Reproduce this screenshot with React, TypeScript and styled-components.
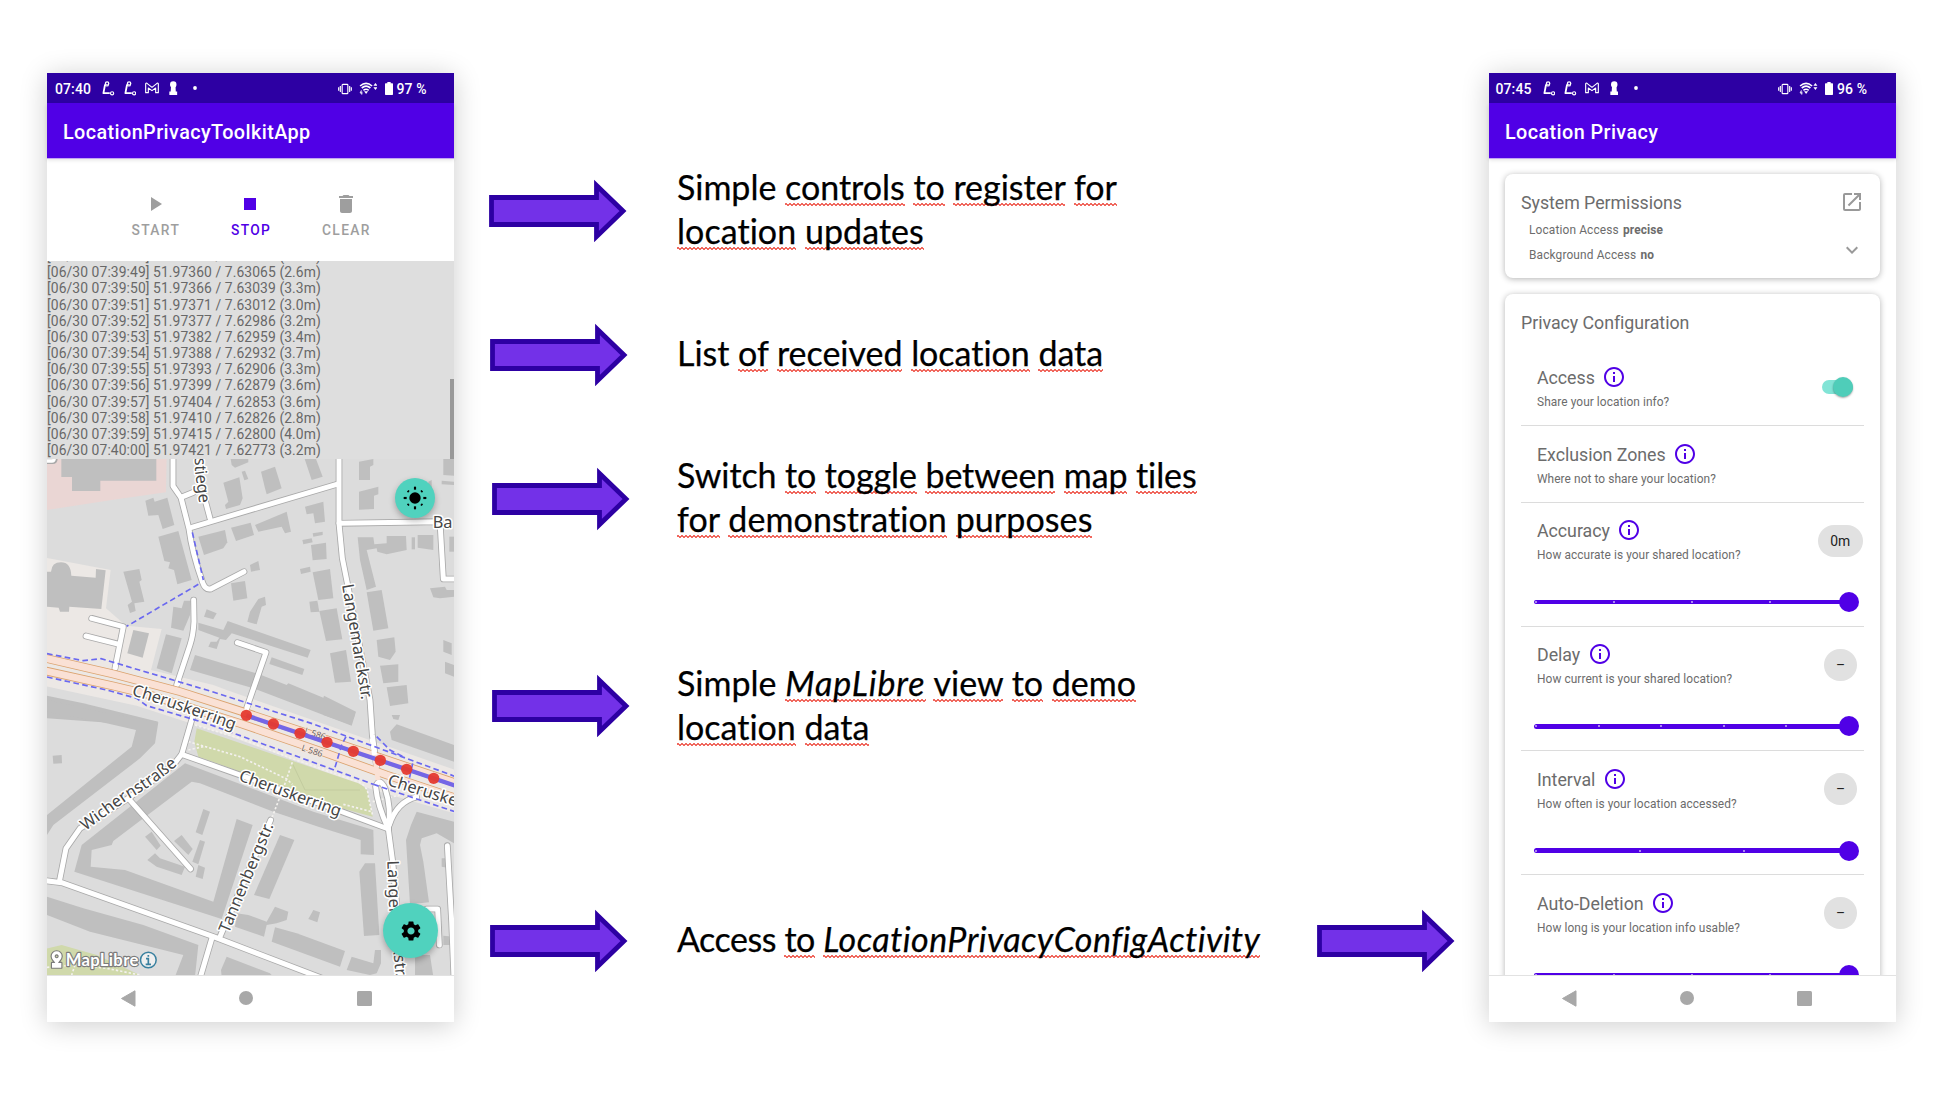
import React from "react";
import styled, { createGlobalStyle, css } from "styled-components";
import {
  MdPlayArrow,
  MdStop,
  MdDelete,
  MdOpenInNew,
  MdExpandMore,
  MdInfoOutline,
  MdSettings,
} from "react-icons/md";

const GlobalStyle = createGlobalStyle`
  body { margin: 0; background: #fff; }
  * { box-sizing: border-box; }
`;

const purple = "#5000e6";
const deep = "#2d00a3";
const teal = "#50d2be";

/* ---------- slide ---------- */

const Slide = styled.main`
  width: 1945px;
  height: 1094px;
  padding: 73px 49px 0 47px;
  display: flex;
  align-items: flex-start;
  overflow: hidden;
  background: #fff;
  font-family: Roboto, "Liberation Sans", sans-serif;
`;

const PhoneFrame = styled.section`
  width: 407px;
  height: 949px;
  flex: none;
  display: flex;
  flex-direction: column;
  background: #fff;
  box-shadow: 0 3px 26px rgba(0, 0, 0, 0.2);
`;

const StatusBar = styled.div<{ $shift: number }>`
  height: 30px;
  flex: none;
  display: flex;
  align-items: center;
  justify-content: space-between;
  padding: 1px ${(p) => 28 + p.$shift}px 0 ${(p) => 8 - p.$shift}px;
  background: ${deep};
  color: #fff;
  font-size: 14px;
  font-weight: 500;
  letter-spacing: 0.1px;
`;

const StatusGroup = styled.div`
  display: flex;
  align-items: center;
  svg { display: block; }
`;

const Clock = styled.span`
  width: 46.2px;
`;

const Notices = styled.div`
  display: flex;
  align-items: center;
  gap: 8.3px;
  margin-top: -1px;
`;

const Keyhole = styled.span`
  margin: 0 7.4px 0 2.2px;
`;

const Percent = styled.span`
  margin-left: 4px;
  width: 29.5px;
  white-space: nowrap;
`;

const AppBar = styled.header`
  height: 55px;
  flex: none;
  display: flex;
  align-items: center;
  padding: 3px 16px 0;
  background: ${purple};
  color: #fff;
  font-size: 19.8px;
  font-weight: 500;
  letter-spacing: 0.42px;
  box-shadow: 0 1px 0 #c3a5f3, 0 2px 4px rgba(0, 0, 0, 0.12);
  position: relative;
  z-index: 1;
`;

const NavBar = styled.nav<{ $shift: number }>`
  height: 47px;
  flex: none;
  display: flex;
  justify-content: space-between;
  align-items: center;
  padding: 0 ${(p) => 82.5 + p.$shift}px 2px ${(p) => 74 - p.$shift}px;
  border-top: 1px solid #e2e2e2;
  background: #fff;
  svg { display: block; }
`;

/* ---------- left phone ---------- */

const Controls = styled.div`
  height: 103px;
  flex: none;
  display: flex;
  justify-content: center;
  padding: 34px 0 0;
`;

const ControlButton = styled.button<{ $active?: boolean }>`
  width: 95.3px;
  padding: 0;
  border: 0;
  background: none;
  display: flex;
  flex-direction: column;
  align-items: center;
  gap: 6px;
  font: 500 13.8px/16px Roboto, sans-serif;
  letter-spacing: 1.35px;
  color: ${(p) => (p.$active ? purple : "#9e9e9e")};
  svg { width: 24px; height: 24px; }
`;

const ControlLabel = styled.span`
  padding-left: 1.3px;
`;

const Log = styled.div`
  height: 198px;
  flex: none;
  overflow: hidden;
  display: flex;
  flex-direction: column;
  justify-content: flex-end;
  padding-bottom: 0.6px;
  background: #dedede;
  color: #686868;
  font-size: 13.86px;
  line-height: 16.18px;
  letter-spacing: 0.09px;
  position: relative;
`;

const LogLine = styled.div`
  flex: none;
  white-space: nowrap;
`;

const ScrollThumb = styled.div`
  position: absolute;
  right: 0;
  bottom: 0;
  width: 4px;
  height: 80px;
  background: #999;
`;

const MapView = styled.div`
  position: relative;
  flex: 1;
  overflow: hidden;
  > svg { display: block; }
`;

const Fab = styled.button<{ $size: number; $right: number; $top: number }>`
  position: absolute;
  right: ${(p) => p.$right}px;
  top: ${(p) => p.$top}px;
  width: ${(p) => p.$size}px;
  height: ${(p) => p.$size}px;
  padding: 0;
  border: 0;
  border-radius: 50%;
  display: grid;
  place-items: center;
  color: #000;
  background: ${teal};
  box-shadow: 0 3px 6px rgba(0, 0, 0, 0.28);
  svg { width: 24px; height: 24px; }
`;

/* ---------- notes ---------- */

const Notes = styled.section`
  width: 966px;
  margin: 66px 34px 0 35px;
  display: grid;
  grid-template-rows: 144px 144px 144px 269px 202px;
  flex: none;
`;

const NoteRow = styled.div<{ $indent: number }>`
  display: flex;
  align-items: center;
  padding-left: ${(p) => p.$indent}px;
`;

const NoteText = styled.div<{ $offset: number; $lift: number }>`
  margin-left: ${(p) => p.$offset}px;
  padding-bottom: ${(p) => p.$lift}px;
  width: 640px;
  font-family: Lato, "Open Sans", sans-serif;
  font-size: 34px;
  line-height: 44px;
  font-variant-ligatures: none;
  -webkit-text-stroke: 0.25px #000;
  color: #000;
`;

const NoteLine = styled.div<{ $tracking: number }>`
  width: max-content;
  white-space: nowrap;
  letter-spacing: ${(p) => p.$tracking}px;
`;

const Wavy = styled.span<{ $italic?: number }>`
  ${(p) => p.$italic !== undefined && css`
    font-style: italic;
    letter-spacing: ${p.$italic}px;
  `}
  padding-bottom: 1px;
  background-image: linear-gradient(45deg, transparent 38%, #f0685e 38% 62%, transparent 62%),
    linear-gradient(-45deg, transparent 38%, #f0685e 38% 62%, transparent 62%);
  background-size: 4px 3px, 4px 3px;
  background-position: 0 calc(100% - 2px), 2px calc(100% - 2px);
  background-repeat: repeat-x;
`;

const ArrowSvg = styled.svg`
  display: block;
  flex: none;
`;

const Trailing = styled.div`
  margin-left: auto;
`;

/* ---------- right phone ---------- */

const Settings = styled.div`
  flex: 1;
  min-height: 0;
  overflow: hidden;
  padding: 16px 16px 0;
  display: flex;
  flex-direction: column;
  gap: 16px;
`;

const Card = styled.article<{ $h: number }>`
  height: ${(p) => p.$h}px;
  flex: none;
  padding: 16px;
  border-radius: 8px;
  background: #fff;
  color: #6c6c6c;
  box-shadow: 0 1px 6px rgba(0, 0, 0, 0.3);
`;

const CardHead = styled.div`
  display: flex;
  align-items: center;
  justify-content: space-between;
  height: 24px;
  svg { width: 24px; height: 24px; color: #999; }
`;

const CardTitle = styled.h2`
  margin: 0;
  padding-top: 1px;
  font-size: 17.8px;
  line-height: 24px;
  font-weight: 400;
  letter-spacing: -0.04px;
`;

const Permissions = styled.div`
  padding-top: 4px;
`;

const Permission = styled.div`
  height: 24.5px;
  padding-left: 8px;
  display: flex;
  align-items: center;
  justify-content: space-between;
  font-size: 11.9px;
  letter-spacing: 0.14px;
  b { margin-left: 1px; }
  svg { width: 24px; height: 24px; color: #999; margin-top: -9px; }
`;

const OptionList = styled.div`
  padding-top: 15.3px;
`;

const Item = styled.div<{ $h: number }>`
  height: ${(p) => p.$h}px;
  padding: 16.6px 0 0 16px;
  border-bottom: 1px solid #dcdcdc;
`;

const ItemRow = styled.div`
  display: flex;
  justify-content: space-between;
  align-items: center;
  height: 45px;
`;

const ItemTitle = styled.h3`
  margin: 0;
  display: flex;
  align-items: center;
  gap: 7.5px;
  font-size: 17.8px;
  line-height: 24px;
  font-weight: 400;
  letter-spacing: -0.03px;
  svg { width: 24px; height: 24px; color: ${purple}; margin-top: -2px; }
`;

const Hint = styled.p`
  margin: 3px 0 0;
  font-size: 11.9px;
  line-height: 18px;
  letter-spacing: 0.07px;
`;

const Chip = styled.span<{ $round?: boolean }>`
  min-width: ${(p) => (p.$round ? 33 : 44.5)}px;
  height: 32px;
  margin: 0 ${(p) => (p.$round ? 7 : 1.5)}px 2px 0;
  border-radius: 16px;
  display: grid;
  place-items: center;
  background: #e1e1e1;
  color: #222;
  font-size: 13.9px;
`;

const Toggle = styled.span`
  width: 31px;
  height: 14px;
  margin: 0 11px 3px 0;
  border-radius: 7px;
  background: #82e4d6;
  display: flex;
  align-items: center;
  justify-content: flex-end;
`;

const Knob = styled.span`
  width: 20px;
  height: 20px;
  border-radius: 50%;
  background: #4fcdb9;
  box-shadow: 0 1px 2px rgba(0, 0, 0, 0.35);
  flex: none;
`;

const Slider = styled.div`
  height: 20px;
  margin: 28px 5.5px 0 -3px;
  display: grid;
  align-items: center;
  > * { grid-area: 1 / 1; }
`;

const Track = styled.div`
  height: 4.4px;
  margin-right: 8px;
  border-radius: 3px;
  background: ${purple};
  display: flex;
  justify-content: space-between;
  align-items: center;
  padding: 0 1px;
`;

const Tick = styled.i`
  width: 2px;
  height: 2px;
  border-radius: 1px;
  background: #c9b3f6;
`;

const Thumb = styled.div`
  width: 20px;
  height: 20px;
  border-radius: 50%;
  background: ${purple};
  justify-self: end;
`;

/* ---------- small drawings ---------- */

const RouteIcon = () => (
  <svg width="13.5" height="15" viewBox="0 0 40 45" fill="none" stroke="#fff">
    <circle cx="18" cy="7.5" r="5" strokeWidth="4" />
    <path d="M12 10L7 36.5H26" strokeWidth="5.5" strokeLinejoin="round" />
    <path d="M11 13q6 4 12 1" strokeWidth="3" />
    <circle cx="33" cy="37" r="4.8" strokeWidth="3.4" />
  </svg>
);

const MailIcon = () => (
  <svg width="14" height="12" viewBox="0 0 42 36" fill="none" stroke="#fff" strokeWidth="3.4" strokeLinejoin="round">
    <path d="M2 32V6q0-4 4-2l15 12L36 4q4-2 4 2v26h-8V18L21 26 10 18v14z" />
  </svg>
);

const KeyholeIcon = () => (
  <svg width="8.5" height="14" viewBox="0 0 25 41" fill="#fff">
    <circle cx="12.5" cy="10" r="9.5" />
    <path d="M6 14h13l1 17h4v10H1V31h4z" />
  </svg>
);

const VibrateIcon = () => (
  <svg width="14" height="12" viewBox="0 0 42 36" fill="none" stroke="#fff" strokeWidth="3.4">
    <rect x="12.5" y="4" width="17" height="28" rx="2" />
    <path d="M7 9v18M2 13v10M35 9v18M40 13v10" />
  </svg>
);

const WifiIcon = () => (
  <svg width="18.5" height="13" viewBox="0 0 55 39" fill="none" stroke="#fff">
    <path d="M3 12Q21-4 39 12" strokeWidth="5" />
    <path d="M8 18Q21 7 34 18" strokeWidth="5" />
    <path d="M13 25q8-7 16 0" strokeWidth="4.4" />
    <path d="M15 28h12l-6 8z" fill="#fff" stroke="none" />
    <path d="M7 25L3 33h7M8 28v10" strokeWidth="2.6" />
    <path d="M43 11l6-8 6 8zM43 16l6 8 6-8z" fill="#fff" stroke="none" />
  </svg>
);

const BatteryIcon = () => (
  <svg width="8" height="13" viewBox="0 0 24 39" fill="#fff">
    <path d="M7 0h10v4h5q2 0 2 2v31q0 2-2 2H2q-2 0-2-2V6q0-2 2-2h5z" />
  </svg>
);

const SunIcon = () => (
  <svg viewBox="-36 -36 72 72" stroke="#000" strokeWidth="6.5">
    <circle r="17" stroke="none" />
    {[0, 45, 90, 135, 180, 225, 270, 315].map((a) => (
      <path key={a} transform={`rotate(${a})`} d={a % 90 ? "M0-31v5" : "M0-34v9"} />
    ))}
  </svg>
);

const Arrow = () => (
  <ArrowSvg width="138" height="66" viewBox="0 0 138 66">
    <path
      d="M2.5 19.5H107.5V7.5L134 33L107.5 58.5V46.5H2.5z"
      fill="#7331e8"
      stroke={deep}
      strokeWidth="4.8"
    />
  </ArrowSvg>
);

const Status = ({ time, level, shift }: { time: string; level: string; shift: number }) => (
  <StatusBar $shift={shift}>
    <StatusGroup>
      <Clock>{time}</Clock>
      <Notices>
        <RouteIcon />
        <RouteIcon />
        <MailIcon />
        <Keyhole><KeyholeIcon /></Keyhole>
        <svg width="4" height="4" viewBox="0 0 4 4"><circle cx="2" cy="2" r="1.9" fill="#fff" /></svg>
      </Notices>
    </StatusGroup>
    <StatusGroup>
      <VibrateIcon />
      <svg width="7" height="1" />
      <WifiIcon />
      <svg width="7.5" height="1" />
      <BatteryIcon />
      <Percent>{level}</Percent>
    </StatusGroup>
  </StatusBar>
);

const Nav = ({ shift }: { shift: number }) => (
  <NavBar $shift={shift}>
    <svg width="15" height="17" viewBox="0 0 15 17"><path d="M14 .8v15.4L.5 8.5z" fill="#a8a8a8" stroke="#a8a8a8" strokeLinejoin="round" /></svg>
    <svg width="14" height="14" viewBox="0 0 14 14"><circle cx="7" cy="7" r="7" fill="#a8a8a8" /></svg>
    <svg width="15" height="15" viewBox="0 0 15 15"><rect width="15" height="15" rx="1.5" fill="#a8a8a8" /></svg>
  </NavBar>
);

/* ---------- map ---------- */

const buildingsNorth = [
  "64,0 349,0 349,77 181,77 181,108 96,108 96,66 64,66",
  "316,137 340,128 344,140 382,128 403,210 368,222 355,180 325,182",
  "355,245 415,228 455,375 412,388 402,345 385,340 390,322 373,318",
  "250,350 298,342 305,375 298,380 313,440 283,445 287,468 270,474 263,450 276,440",
  "400,455 425,460 432,437 452,437 450,480 430,527 393,518",
  "378,538 425,550 395,655 350,640",
  "280,525 327,535 308,608 262,595",
  "570,0 625,12 625,22 585,38 575,30",
  "605,50 615,47 625,72 613,76",
  "550,83 598,67 608,130 600,150 558,162 555,150 565,140",
  "663,50 705,35 725,100 680,118 675,100",
  "790,0 828,12 848,65 815,75",
  "957,20 1000,12 1000,30 990,35 990,75 957,75",
  "957,110 1015,95 1015,118 1002,122 1002,162 957,164",
  "1210,12 1242,12 1242,62 1210,60",
  "1205,77 1242,80 1242,90 1205,88",
  "645,210 740,170 753,230 735,235 725,215 655,230",
  "573,218 632,203 642,240 588,258",
  "475,245 555,225 562,262 550,280 492,300",
  "795,155 850,140 855,200 825,205 820,175 800,178",
  "818,235 848,230 848,240 820,245",
  "787,255 815,250 818,262 790,268",
  "813,270 858,263 860,312 818,316",
  "818,352 870,342 880,430 835,435",
  "780,342 810,335 812,350 783,357",
  "630,330 655,318 660,345 633,350",
  "573,385 615,378 622,430 580,437",
  "655,432 675,425 678,450 665,455 650,508 622,500 630,470",
  "500,463 530,475 520,493 492,485",
  "808,440 832,437 838,470 812,472",
  "838,468 890,460 907,553 858,558",
  "475,503 550,525 563,498 812,585 803,608 575,535 558,555 540,552 530,582 505,575 512,560 530,560 538,548 475,525",
  "695,607 793,642 787,660 688,627",
  "465,600 650,655 740,690 745,685 850,728 852,722 948,770 935,812 640,700 450,645",
  "870,595 918,585 933,680 885,683",
  "953,247 1000,247 1003,268 1040,265 1040,243 1098,243 1100,285 1040,298 1012,290 1010,280 980,285 1008,395 980,405 960,315",
  "1115,247 1125,247 1125,283 1115,283",
  "1133,240 1180,240 1180,285 1133,278",
  "980,412 1025,405 1045,520 1000,527",
  "1010,555 1063,547 1067,590 1050,615 1015,605",
  "1020,632 1075,628 1075,680 1030,685",
  "1040,697 1100,690 1105,745 1050,753",
  "1170,400 1215,395 1220,405 1242,405 1242,425 1200,430 1180,427",
  "1210,555 1235,565 1235,600 1210,590",
  "1215,620 1242,630 1242,665 1215,655",
  "1228,245 1242,245 1242,290 1228,290",
  "21,722 130,745 355,800 330,812 21,790",
  "1165,80 1175,75 1175,100 1165,100",
];

const buildingsSouth = [
  "21,-45 180,-10 355,22 345,85 300,130 40,330 21,360 21,300 275,95 288,45 180,20 21,-10",
  "38,122 65,120 66,145 40,146",
  "435,145 475,160 820,290 1000,345 1002,420 962,418 962,375 835,335 700,290 480,205 455,200 220,378 215,390 155,405 152,455 255,465 520,560 590,312 638,330 545,612 103,470 125,390",
  "490,282 510,290 487,360 467,352",
  "480,375 495,380 475,448 457,440",
  "475,450 495,458 488,492 467,485",
  "335,350 362,392 350,405 315,365",
  "425,360 458,402 445,420 402,378",
  "345,415 360,430 435,455 425,480 350,455 322,435",
  "720,360 763,375 688,552 642,540",
  "590,595 625,600 680,620 705,575 745,590 740,615 710,625 680,630 672,665 585,635",
  "820,585 840,592 832,622 805,612",
  "705,637 735,645 770,655 915,708 900,755 695,680",
  "935,725 1000,745 1005,705 1023,705 1023,745 1010,775 990,780 920,765",
  "560,725 690,775 700,785 545,785 543,765",
  "975,445 1005,445 1018,660 972,663 958,470",
  "1130,290 1242,320 1242,385 1190,355 1145,370 1140,390 1150,440 1167,562 1110,568 1098,375 1113,330",
  "1050,50 1070,28 1242,90 1242,140 1055,75",
  "840,-15 945,0 930,28 850,0",
  "21,545 130,580 310,630 475,690 465,785 405,785 430,720 150,650 21,600",
  "1125,720 1170,720 1180,785 1125,785",
  "1210,662 1242,665 1242,690 1210,690",
  "1055,0 1080,0 1075,15 1060,12",
  "1205,430 1222,430 1222,458 1205,455",
];

const streets = [
  "M399,0V93L423,128L447,222C452,262 470,332 487,380Q495,405 512,402L612,350",
  "M455,217L890,88",
  "M510,190L490,115M423,127L460,112",
  "M897,0V205L907,310L925,400L960,580L990,735L997,840L1012,950",
  "M897,205L1200,200L1210,372H1260",
  "M155,490L250,515L225,640M138,543L237,568",
  "M461,435L462,500Q460,540 450,570L410,690",
  "M592,563L678,592L618,765",
  "M458,785L425,898L400,930L265,1030L120,1120L78,1180L58,1280",
  "M425,898L600,960L900,1068L1045,1122",
  "M265,1030L452,1242",
  "M0,1275L65,1283L520,1445L860,1575",
  "M692,1095L540,1445",
  "M517,1445L480,1570",
  "M1045,1122L1058,1220L1075,1400L1080,1570",
  "M1045,1122Q1012,1050 1007,995Q1018,965 1035,1000Q1055,1060 1045,1122",
  "M1048,1110Q1070,1040 1130,1026",
  "M1222,1172L1235,1400L1242,1570",
  "M1160,1362H1193L1198,1470",
];

const ringLanes = [
  "M0,606L220,657L420,710L620,774L860,854L1250,985",
  "M0,644L220,693L320,717L600,805L840,888L1040,960L1250,1030",
];

const footways = [
  "M21,596L130,617L183,611L500,705L820,807L1250,966",
  "M21,666L200,705L290,730L320,752L500,805L560,827L880,944L1000,988",
  "M1000,988L1250,1072",
  "M457,232L490,375",
  "M475,388L260,514",
  "M918,845L905,870L883,944",
  "M1010,845L1050,885L1090,905",
  "M1118,925L1105,985",
];

const paths = [
  "M445,860L600,905L740,972L757,988",
  "M465,810L600,850L760,912L955,980Q985,995 985,1025L998,1082",
  "M757,922L730,1000L695,1090",
  "M998,1040L1080,1020",
  "M910,1048L995,1070",
  "M21,1537L105,1530L200,1540L300,1560M105,1530L95,1560",
  "M445,885L490,875",
];

const track = [
  [619, 781], [700, 807], [780, 835], [861, 862], [940, 889], [1021, 916], [1100, 943], [1181, 970],
];

const Cartography = () => (
  <svg width="407" height="516" viewBox="21 12 1221 1548" preserveAspectRatio="none">
    <rect x="0" y="0" width="1260" height="1600" fill="#dcdcdc" />
    <path d="M0,0H380L378,112L230,133L0,168z" fill="#ead6d4" />
    <path d="M0,305L212,345L198,460L258,512L365,522L333,645L520,690L560,705L1260,950V1080L1000,1005L560,840L290,752L0,690z" fill="#ece8e5" />
    <path d="M470,820L955,985Q985,1000 985,1020L998,1085L905,1060L475,905L463,860z" fill="#d0d9ab" />
    <path d="M757,925L795,1005H960" fill="none" stroke="#c3cc9f" strokeWidth="3" />
    <path d="M0,1485L65,1470L170,1500L300,1560H0z" fill="#d0d9ab" />
    <g fill="#bfbfbf">
      <path d="M21,350H33Q35,322 63,322Q92,322 94,362L167,368L168,342L197,346L184,462L88,455L87,470H60L56,458L21,455z" />
      {buildingsNorth.map((p) => <polygon key={p} points={p} />)}
      <g transform="translate(0 780)">
        {buildingsSouth.map((p) => <polygon key={p} points={p} />)}
      </g>
    </g>
    <g fill="none" strokeDasharray="7 6" stroke="#f3f1ee" strokeWidth="5">
      {paths.map((d) => <path key={d} d={d} />)}
    </g>
    <g fill="none" strokeLinejoin="round" strokeLinecap="round">
      <path d="M21,20H38Q46,20 46,10" stroke="#a9a9a9" strokeWidth="14" />
      <path d="M21,18H36Q43,18 43,8" stroke="#fff" strokeWidth="10" />
      {streets.map((d) => <path key={d} d={d} stroke="#a9a9a9" strokeWidth="20" />)}
      {streets.map((d) => <path key={d} d={d} stroke="#fff" strokeWidth="15" />)}
    </g>
    <g fill="none">
      {ringLanes.map((d) => <path key={d} d={d} stroke="#dba36f" strokeWidth="26" />)}
      {ringLanes.map((d) => <path key={d} d={d} stroke="#fae1d5" strokeWidth="21" />)}
      <path d="M1004,905L1014,975" stroke="#fae1d5" strokeWidth="14" />
      <path d="M228,625L225,643M412,690L418,672M619,765L628,740" stroke="#fff" strokeWidth="14" />
      <path d="M996,850L1004,900" stroke="#fff" strokeWidth="15" />
    </g>
    <g fill="none" stroke="#6a68f0" strokeWidth="5" strokeDasharray="17 10">
      {footways.map((d) => <path key={d} d={d} />)}
    </g>
    <g fontFamily='"Open Sans", "Noto Sans", sans-serif' fontSize="26" fill="#5a5a5a" stroke="#f7e6dc" strokeWidth="5" paintOrder="stroke">
      <text transform="translate(783 886) rotate(18)">L 586</text>
      <text transform="translate(792 835) rotate(18)">L 586</text>
    </g>
    <path d="M619,781L1260,997" stroke="#7466e6" strokeWidth="13" fill="none" />
    {track.map(([x, y]) => <circle key={x} cx={x} cy={y} r="17" fill="#e53a2f" fillOpacity=".95" />)}
    <defs>
      <path id="p-stiege" d="M464,-60L465,50L480,160" />
      <path id="p-lange" d="M906,390L930,530L965,737" />
      <path id="p-cher1" d="M274,720Q420,765 600,832" />
      <path id="p-cher2" d="M594,976L910,1090" />
      <path id="p-cher3" d="M1040,990L1300,1070" />
      <path id="p-wich" d="M137,1128Q200,1080 270,1030Q350,985 430,915" />
      <path id="p-tann" d="M566,1436L710,1090" />
      <path id="p-lange2" d="M1042,1217L1048,1370L1068,1570" />
    </defs>
    <g fontFamily='"Noto Sans", "Open Sans", sans-serif' fontSize="49" fill="#454545" stroke="#fff" strokeWidth="9" strokeLinejoin="round" paintOrder="stroke">
      <text><textPath href="#p-stiege" startOffset="68" textLength="138">stiege</textPath></text>
      <text><textPath href="#p-lange" textLength="350">Langemarckstr.</textPath></text>
      <text><textPath href="#p-cher1" textLength="325">Cheruskerring</textPath></text>
      <text><textPath href="#p-cher2" textLength="322">Cheruskerring</textPath></text>
      <text><textPath href="#p-cher3">Cheruskerring</textPath></text>
      <text><textPath href="#p-wich" textLength="340">Wichernstraße</textPath></text>
      <text><textPath href="#p-tann" textLength="352">Tannenbergstr.</textPath></text>
      <text><textPath href="#p-lange2" textLength="352">Langemarckstr.</textPath></text>
      <text x="1178" y="218">Ba</text>
    </g>
    <g fill="#fff" stroke="#7c7c7c" strokeWidth="7" paintOrder="stroke" strokeLinejoin="round">
      <path fillRule="evenodd" d="M50,1489a15,15 0 0 1 15,15c0,9 -7,13 -11,20h10v14H36v-14h10c-4,-7 -11,-11 -11,-20a15,15 0 0 1 15,-15zM50,1498a6,6 0 1 0 .1,0z" />
      <text x="77" y="1532" fontFamily="Lato, sans-serif" fontWeight="700" fontSize="50" textLength="218">MapLibre</text>
    </g>
    <circle cx="325" cy="1515" r="23.5" fill="#fff" fillOpacity=".55" stroke="#39809f" strokeWidth="4.5" />
    <path d="M325,1500v5M318,1511h7v17M317,1528h16" stroke="#39809f" strokeWidth="5" fill="none" />
  </svg>
);

/* ---------- data ---------- */

const log = [
  "[06/30 07:39:48] 51.97355 / 7.63092 (2.8m)",
  "[06/30 07:39:49] 51.97360 / 7.63065 (2.6m)",
  "[06/30 07:39:50] 51.97366 / 7.63039 (3.3m)",
  "[06/30 07:39:51] 51.97371 / 7.63012 (3.0m)",
  "[06/30 07:39:52] 51.97377 / 7.62986 (3.2m)",
  "[06/30 07:39:53] 51.97382 / 7.62959 (3.4m)",
  "[06/30 07:39:54] 51.97388 / 7.62932 (3.7m)",
  "[06/30 07:39:55] 51.97393 / 7.62906 (3.3m)",
  "[06/30 07:39:56] 51.97399 / 7.62879 (3.6m)",
  "[06/30 07:39:57] 51.97404 / 7.62853 (3.6m)",
  "[06/30 07:39:58] 51.97410 / 7.62826 (2.8m)",
  "[06/30 07:39:59] 51.97415 / 7.62800 (4.0m)",
  "[06/30 07:40:00] 51.97421 / 7.62773 (3.2m)",
];

type Option = { name: string; hint: string; height: number; control?: string; steps?: number };

const options: Option[] = [
  { name: "Access", hint: "Share your location info?", height: 76.7, control: "toggle" },
  { name: "Exclusion Zones", hint: "Where not to share your location?", height: 76.7 },
  { name: "Accuracy", hint: "How accurate is your shared location?", height: 124.2, control: "0m", steps: 4 },
  { name: "Delay", hint: "How current is your shared location?", height: 124.2, control: "–", steps: 5 },
  { name: "Interval", hint: "How often is your location accessed?", height: 124.2, control: "–", steps: 3 },
  { name: "Auto-Deletion", hint: "How long is your location info usable?", height: 124.2, control: "–", steps: 4 },
];

/* A flagged word gets the spell-check squiggle; "italic" is its letter spacing when slanted. */
type Word = string | { w: string; italic?: number };
type Line = { tracking: number; words: Word[] };
const s = (w: string, italic?: number): Word => ({ w, italic });

const notes: { indent: number; lift: number; trailing?: boolean; lines: Line[] }[] = [
  {
    indent: 0,
    lift: 4,
    lines: [
      { tracking: -0.02, words: ["Simple", s("controls"), s("to"), s("register"), s("for")] },
      { tracking: 0.05, words: [s("location"), s("updates")] },
    ],
  },
  { indent: 1, lift: 4, lines: [{ tracking: -0.03, words: ["List", s("of"), s("received"), s("location"), s("data")] }] },
  {
    indent: 3,
    lift: 4,
    lines: [
      { tracking: -0.1, words: ["Switch", s("to"), s("toggle"), s("between"), s("map"), s("tiles")] },
      { tracking: 0.08, words: [s("for"), s("demonstration"), s("purposes")] },
    ],
  },
  {
    indent: 3,
    lift: 1.5,
    lines: [
      { tracking: 0, words: ["Simple", s("MapLibre", 0.95), s("view"), s("to"), s("demo")] },
      { tracking: 0, words: [s("location"), s("data")] },
    ],
  },
  {
    indent: 1,
    lift: 3.5,
    trailing: true,
    lines: [{ tracking: -0.45, words: ["Access", s("to"), s("LocationPrivacyConfigActivity", 0.48)] }],
  },
];

const OptionItem = ({ option }: { option: Option }) => (
  <Item $h={option.height}>
    <ItemRow>
      <div>
        <ItemTitle>{option.name}<MdInfoOutline /></ItemTitle>
        <Hint>{option.hint}</Hint>
      </div>
      {option.control === "toggle" && <Toggle><Knob /></Toggle>}
      {option.control && option.control !== "toggle" && (
        <Chip $round={option.control === "–"}>{option.control}</Chip>
      )}
    </ItemRow>
    {option.steps && (
      <Slider>
        <Track>{Array.from({ length: option.steps + 1 }, (_, i) => <Tick key={i} />)}</Track>
        <Thumb />
      </Slider>
    )}
  </Item>
);

export default function App() {
  return (
    <>
      <GlobalStyle />
      <Slide>
        <PhoneFrame>
          <Status time="07:40" level="97 %" shift={0} />
          <AppBar>LocationPrivacyToolkitApp</AppBar>
          <Controls>
            <ControlButton><MdPlayArrow /><ControlLabel>START</ControlLabel></ControlButton>
            <ControlButton $active><MdStop /><ControlLabel>STOP</ControlLabel></ControlButton>
            <ControlButton><MdDelete /><ControlLabel>CLEAR</ControlLabel></ControlButton>
          </Controls>
          <Log>
            {log.map((l) => <LogLine key={l}>{l}</LogLine>)}
            <ScrollThumb />
          </Log>
          <MapView>
            <Cartography />
            <Fab $size={40} $right={19.5} $top={19}><SunIcon /></Fab>
            <Fab $size={55} $right={16} $top={444}><MdSettings /></Fab>
          </MapView>
          <Nav shift={0} />
        </PhoneFrame>

        <Notes>
          {notes.map((n, i) => (
            <NoteRow key={i} $indent={n.indent}>
              <Arrow />
              <NoteText $offset={50 - n.indent} $lift={n.lift}>
                {n.lines.map((line, j) => (
                  <NoteLine key={j} $tracking={line.tracking}>
                    {line.words.map((word, k) => (
                      <React.Fragment key={k}>
                        {k > 0 && " "}
                        {typeof word === "string" ? word : <Wavy $italic={word.italic}>{word.w}</Wavy>}
                      </React.Fragment>
                    ))}
                  </NoteLine>
                ))}
              </NoteText>
              {n.trailing && <Trailing><Arrow /></Trailing>}
            </NoteRow>
          ))}
        </Notes>

        <PhoneFrame>
          <Status time="07:45" level="96 %" shift={1.5} />
          <AppBar>Location Privacy</AppBar>
          <Settings>
            <Card $h={104}>
              <CardHead><CardTitle>System Permissions</CardTitle><MdOpenInNew /></CardHead>
              <Permissions>
                <Permission><span>Location Access <b>precise</b></span></Permission>
                <Permission><span>Background Access <b>no</b></span><MdExpandMore /></Permission>
              </Permissions>
            </Card>
            <Card $h={760}>
              <CardHead><CardTitle>Privacy Configuration</CardTitle></CardHead>
              <OptionList>
                {options.map((o) => <OptionItem key={o.name} option={o} />)}
              </OptionList>
            </Card>
          </Settings>
          <Nav shift={1.5} />
        </PhoneFrame>
      </Slide>
    </>
  );
}
